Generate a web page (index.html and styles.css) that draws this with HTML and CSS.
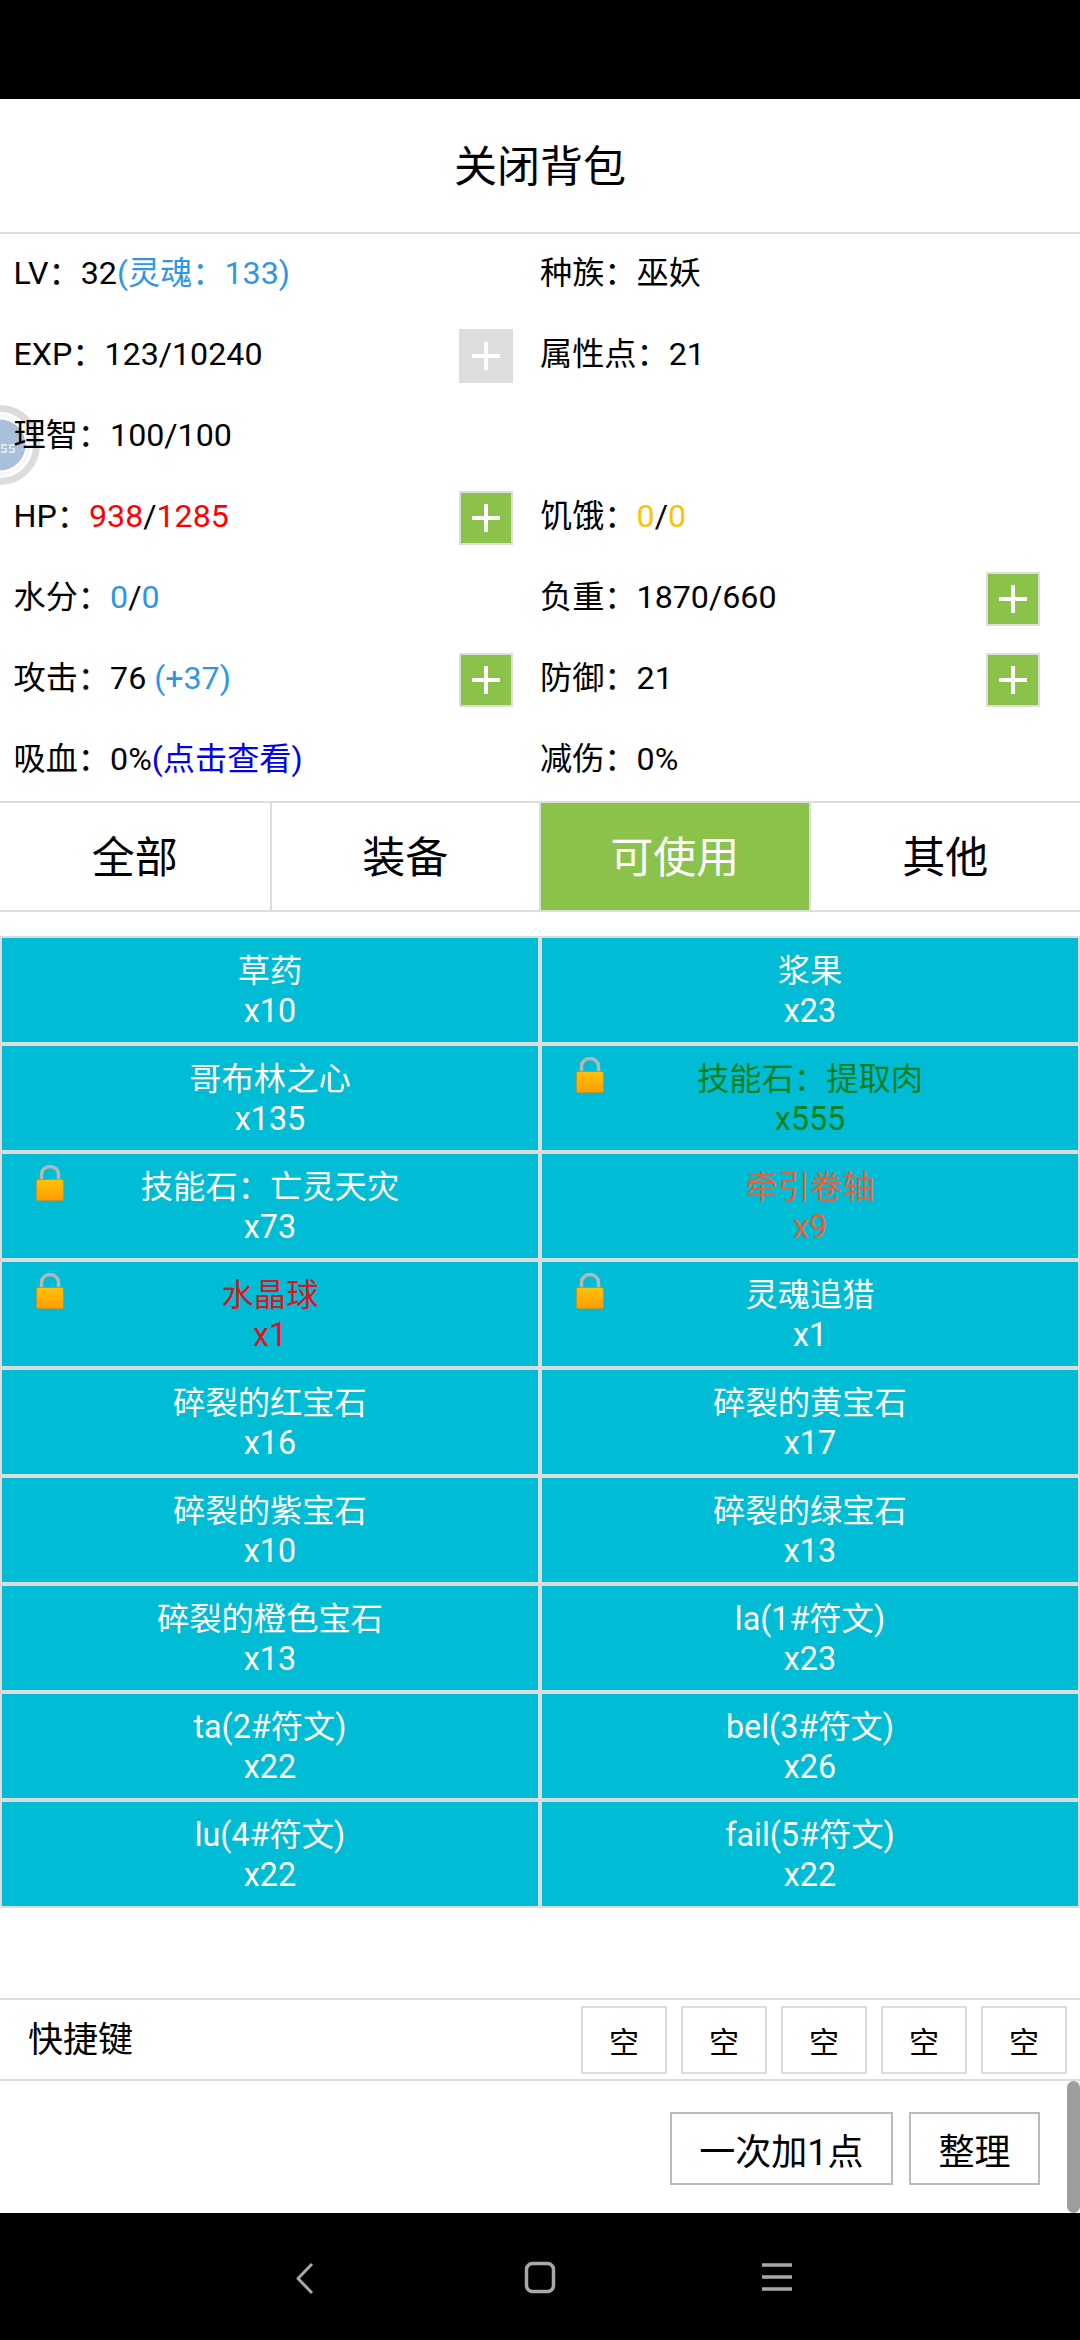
FILE: index.html
```html
<!DOCTYPE html>
<html lang="zh">
<head>
<meta charset="utf-8">
<title>关闭背包</title>
<link rel="stylesheet" href="styles.css">
</head>
<body>
<div class="phone">
  <div class="statusbar"></div>
  <div class="title"><span>关闭背包</span></div>
  <div class="stats">
    <div class="stat left"><span>LV：32<span class="c-sky">(灵魂：133)</span></span></div>
    <div class="stat right"><span>种族：巫妖</span></div>
    <div class="stat left"><span>EXP：123/10240</span><button class="plus off"><svg width="28" height="28" viewBox="0 0 28 28"><path class="cross" d="M12 0h4v12h12v4H16v12h-4V16H0v-4h12z"/></svg></button></div>
    <div class="stat right"><span>属性点：21</span></div>
    <div class="stat left"><span>理智：100/100</span></div>
    <div class="stat right"></div>
    <div class="stat left"><span>HP：<span class="c-red">938</span>/<span class="c-red">1285</span></span><button class="plus"><svg width="28" height="28" viewBox="0 0 28 28"><path class="cross" d="M12 0h4v12h12v4H16v12h-4V16H0v-4h12z"/></svg></button></div>
    <div class="stat right"><span>饥饿：<span class="c-amber">0</span>/<span class="c-amber">0</span></span></div>
    <div class="stat left"><span>水分：<span class="c-sky">0</span>/<span class="c-sky">0</span></span></div>
    <div class="stat right"><span>负重：1870/660</span><button class="plus"><svg width="28" height="28" viewBox="0 0 28 28"><path class="cross" d="M12 0h4v12h12v4H16v12h-4V16H0v-4h12z"/></svg></button></div>
    <div class="stat left"><span>攻击：76 <span class="c-sky">(+37)</span></span><button class="plus"><svg width="28" height="28" viewBox="0 0 28 28"><path class="cross" d="M12 0h4v12h12v4H16v12h-4V16H0v-4h12z"/></svg></button></div>
    <div class="stat right"><span>防御：21</span><button class="plus"><svg width="28" height="28" viewBox="0 0 28 28"><path class="cross" d="M12 0h4v12h12v4H16v12h-4V16H0v-4h12z"/></svg></button></div>
    <div class="stat left"><span>吸血：0%<span class="c-link">(点击查看)</span></span></div>
    <div class="stat right"><span>减伤：0%</span></div>
  </div>
  <div class="tabs">
    <div class="tab"><span>全部</span></div>
    <div class="tab"><span>装备</span></div>
    <div class="tab active"><span>可使用</span></div>
    <div class="tab"><span>其他</span></div>
  </div>
  <div class="items">
    <div class="item"><div>草药</div><div>x10</div></div>
    <div class="item"><div>浆果</div><div>x23</div></div>
    <div class="item"><div>哥布林之心</div><div>x135</div></div>
    <div class="item t-green"><svg class="lock" viewBox="0 0 28 36"><use href="#lock"/></svg><div>技能石：提取肉</div><div>x555</div></div>
    <div class="item"><svg class="lock" viewBox="0 0 28 36"><use href="#lock"/></svg><div>技能石：亡灵天灾</div><div>x73</div></div>
    <div class="item t-orange"><div>牵引卷轴</div><div>x9</div></div>
    <div class="item t-red"><svg class="lock" viewBox="0 0 28 36"><use href="#lock"/></svg><div>水晶球</div><div>x1</div></div>
    <div class="item"><svg class="lock" viewBox="0 0 28 36"><use href="#lock"/></svg><div>灵魂追猎</div><div>x1</div></div>
    <div class="item"><div>碎裂的红宝石</div><div>x16</div></div>
    <div class="item"><div>碎裂的黄宝石</div><div>x17</div></div>
    <div class="item"><div>碎裂的紫宝石</div><div>x10</div></div>
    <div class="item"><div>碎裂的绿宝石</div><div>x13</div></div>
    <div class="item"><div>碎裂的橙色宝石</div><div>x13</div></div>
    <div class="item"><div>la(1#符文)</div><div>x23</div></div>
    <div class="item"><div>ta(2#符文)</div><div>x22</div></div>
    <div class="item"><div>bel(3#符文)</div><div>x26</div></div>
    <div class="item"><div>lu(4#符文)</div><div>x22</div></div>
    <div class="item"><div>fail(5#符文)</div><div>x22</div></div>
  </div>
  <div class="spacer"></div>
  <div class="shortcuts">
    <div class="sc-label">快捷键</div>
    <div class="sc-slots">
      <div class="slot">空</div>
      <div class="slot">空</div>
      <div class="slot">空</div>
      <div class="slot">空</div>
      <div class="slot">空</div>
    </div>
  </div>
  <div class="actions">
    <div class="act">一次加1点</div>
    <div class="act">整理</div>
  </div>
  <div class="navbar">
    <svg class="nav-back" width="20" height="33" viewBox="0 0 20 33"><path d="M17 2 L3 16.5 L17 31" fill="none" stroke="#a8a8a8" stroke-width="3" stroke-linejoin="round"/></svg>
    <svg class="nav-home" width="32" height="33" viewBox="0 0 32 33"><rect x="2.5" y="2.5" width="27" height="28" rx="6" fill="none" stroke="#a8a8a8" stroke-width="3.5"/></svg>
    <svg class="nav-menu" width="30" height="30" viewBox="0 0 30 30"><path d="M0 3H30M0 15H30M0 27H30" stroke="#a8a8a8" stroke-width="3.5"/></svg>
  </div>
  <div class="scrollbar"></div>
  <svg class="ball" width="44" height="84" viewBox="0 0 44 84">
    <circle cx="0" cy="42" r="36.5" fill="none" stroke="#dcdcdc" stroke-width="7"/>
    <circle cx="0" cy="42" r="29" fill="none" stroke="#f4f6f8" stroke-width="3"/>
    <circle cx="0" cy="42" r="25.5" fill="#a9c0da"/>
    <path d="M1 41h6v2H3v2h4v5H1v-2h4v-2H1zM9 41h6v2h-4v2h4v5H9v-2h4v-2H9z" fill="#dfe6ee"/>
  </svg>
  <svg class="defs" width="0" height="0">
    <defs>
      <linearGradient id="lockfill" x1="0" y1="0" x2="0" y2="1">
        <stop offset="0" stop-color="#ffc107"/>
        <stop offset="1" stop-color="#ff9d00"/>
      </linearGradient>
      <g id="lock">
        <path d="M5.5 16V9.5a8.5 8 0 0 1 17 0V16" fill="none" stroke="#b4b8b4" stroke-width="3.5"/>
        <rect x="0.5" y="14.5" width="27" height="21" rx="1.5" fill="url(#lockfill)" stroke="#b09a3a" stroke-width="1"/>
      </g>
    </defs>
  </svg>
</div>
</body>
</html>
```

FILE: styles.css
```css
* { box-sizing: border-box; }
html, body { margin: 0; padding: 0; }
body {
  font-family: Roboto, "Noto Sans CJK SC", sans-serif;
  color: #000;
  background: #fff;
}
.phone {
  position: relative;
  width: 1080px;
  height: 2340px;
  display: flex;
  flex-direction: column;
  overflow: hidden;
  background: #fff;
}
.statusbar { height: 99px; background: #000; flex: none; }
.title {
  height: 135px;
  flex: none;
  display: flex;
  align-items: center;
  justify-content: center;
  font-size: 43px;
  border-bottom: 2px solid #ddd;
}
.title span { margin-bottom: 5px; }
.stats {
  position: relative;
  z-index: 1;
  display: grid;
  grid-template-columns: 540px 540px;
  grid-auto-rows: 81px;
  flex: none;
}
.stat {
  display: flex;
  align-items: center;
  justify-content: space-between;
  font-size: 32.2px;
  line-height: 40px;
}
.stat > span { margin-bottom: 3px; }
.stat.left { padding: 0 27px 0 13.5px; }
.stat.right { padding: 0 40px 0 0; }
.plus {
  width: 54px;
  height: 54px;
  padding: 0;
  border: 2px solid #ddd;
  background: #8bc34a;
  display: flex;
  align-items: center;
  justify-content: center;
}
.plus.off { background: #ddd; }
.cross { fill: #fff; }
.c-sky { color: #2f96e6; }
.c-red { color: #f00; }
.c-amber { color: #ffc107; }
.c-link { color: #0000ee; }
.tabs {
  display: flex;
  flex: none;
  height: 111px;
  border-top: 2px solid #ddd;
  border-bottom: 2px solid #ddd;
}
.tab {
  width: 270px;
  display: flex;
  align-items: center;
  justify-content: center;
  font-size: 43px;
  border-right: 2px solid #ddd;
}
.tab span { margin-bottom: 5px; }
.tab:first-child { width: 272px; }
.tab:last-child { border-right: 0; }
.tab.active { background: #8bc34a; color: #fff; }
.items {
  margin-top: 24px;
  display: grid;
  grid-template-columns: 540px 540px;
  grid-auto-rows: 108px;
  flex: none;
}
.item {
  position: relative;
  background: #00bcd4;
  border: 2px solid #ddd;
  color: #fff;
  font-size: 32.3px;
  line-height: 40px;
  text-align: center;
  padding-top: 13px;
}
.t-green { color: #088020; }
.t-orange { color: #e2633a; }
.t-red { color: #d9151f; }
.lock {
  position: absolute;
  left: 34px;
  top: 11px;
  width: 28px;
  height: 36px;
}
.spacer { flex: 1; }
.shortcuts {
  flex: none;
  height: 83px;
  border-top: 2px solid #ddd;
  border-bottom: 2px solid #ddd;
  display: flex;
  align-items: center;
  justify-content: space-between;
  padding: 0 13px 0 28px;
}
.sc-label { font-size: 35px; margin-bottom: 6px; }
.sc-slots { display: flex; gap: 14px; }
.slot {
  width: 86px;
  height: 68px;
  border: 2px solid #ddd;
  display: flex;
  align-items: center;
  justify-content: center;
  font-size: 30px;
}
.actions {
  flex: none;
  height: 132px;
  display: flex;
  justify-content: flex-end;
  gap: 16px;
  padding: 31px 40px 0 0;
}
.act {
  height: 73px;
  padding: 0 27.5px;
  border: 2px solid #bbb;
  display: flex;
  align-items: center;
  justify-content: center;
  font-size: 36px;
}
.navbar {
  flex: none;
  height: 127px;
  background: #000;
  position: relative;
}
.nav-back { position: absolute; left: 295px; top: 49px; }
.nav-home { position: absolute; left: 524px; top: 48px; }
.nav-menu { position: absolute; left: 762px; top: 49px; }
.scrollbar {
  position: absolute;
  left: 1067px;
  top: 2081px;
  width: 13px;
  height: 132px;
  background: #9e9e9e;
  border-radius: 7px;
}
.ball {
  position: absolute;
  left: 0;
  top: 403px;
}
.defs { position: absolute; }
```
